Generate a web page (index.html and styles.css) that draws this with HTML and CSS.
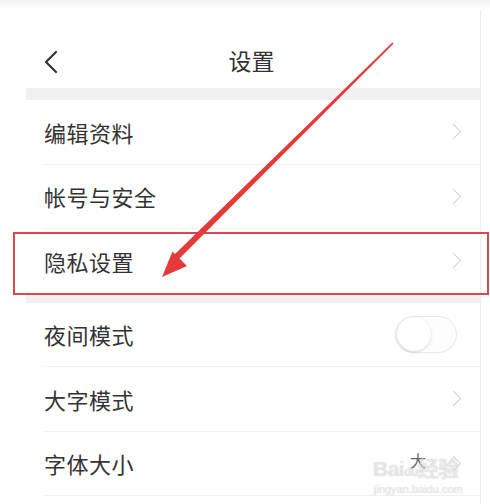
FILE: index.html
```html
<!DOCTYPE html>
<html lang="zh">
<head>
<meta charset="utf-8">
<link rel="stylesheet" href="styles.css">
</head>
<body>
<div class="page">
  <div class="screen">
    <div class="topbar">
      <svg class="back" width="16" height="24" viewBox="0 0 16 24"><path d="M13 2 L3 12 L13 22" fill="none" stroke="#333" stroke-width="2.2" stroke-linecap="round" stroke-linejoin="round"/></svg>
      <div class="title">设置</div>
    </div>
    <div class="band"></div>
    <div class="group">
      <div class="row"><span class="label">编辑资料</span><span class="chev"></span></div>
      <div class="row"><span class="label">帐号与安全</span><span class="chev"></span></div>
      <div class="row"><span class="label">隐私设置</span><span class="chev"></span></div>
    </div>
    <div class="band small"></div>
    <div class="group">
      <div class="row"><span class="label">夜间模式</span><span class="toggle"><span class="knob"></span></span></div>
      <div class="row"><span class="label">大字模式</span><span class="chev"></span></div>
      <div class="row"><span class="label">字体大小</span><span class="right"><span class="value">大</span><span class="chev"></span></span></div>
    </div>
  </div>
  <div class="highlight"></div>
  <svg class="arrow" width="490" height="504" viewBox="0 0 490 504">
    <polygon points="392.3,42.5 393.7,43.5 177.3,260.7 172.7,256.3" fill="#e53a3a"/>
    <polygon points="162,277 172.5,251.5 187,266" fill="#e53a3a"/>
  </svg>
  <div class="watermark">
    <div class="wm1">Bai<span class="paw">du</span>经验</div>
    <div class="wm2">jingyan.baidu.com</div>
  </div>
</div>
</body>
</html>
```
FILE: styles.css
```css
* { box-sizing: border-box; }
html, body { margin: 0; padding: 0; background: #fff; }
body {
  font-family: "Noto Sans CJK SC", "Noto Sans", sans-serif;
  color: #333;
  width: 490px;
  height: 504px;
  overflow: hidden;
}
.page {
  position: relative;
  width: 490px;
  height: 504px;
  padding-top: 10px;
  background: linear-gradient(#f4f4f4 0, #fff 10px);
}
.screen {
  margin-left: 26px;
  width: 455px;
  height: 494px;
  border-right: 1px solid #ececec;
  background: #fff;
}
.topbar {
  height: 78px;
  display: flex;
  align-items: center;
  justify-content: center;
  position: relative;
}
.back {
  position: absolute;
  left: 17px;
  top: 40px;
}
.title {
  font-size: 23px;
  line-height: 1;
  margin-left: -3px;
  margin-top: 22px;
  color: #333;
}
.band {
  height: 12px;
  background: #f0f0f0;
}
.band.small { height: 9px; }
.group { display: flex; flex-direction: column; }
.row {
  height: 64.5px;
  flex: none;
  margin-left: 18px;
  padding-right: 17px;
  display: flex;
  align-items: center;
  justify-content: space-between;
  border-bottom: 1px solid #f0f0f0;
}
.group:first-of-type .row:last-child { border-bottom: none; }
.label {
  font-size: 22px;
  line-height: 1;
  color: #333;
  letter-spacing: 0.5px;
}
.chev {
  width: 11px;
  height: 11px;
  border-top: 1.5px solid #d2d2d2;
  border-right: 1.5px solid #d2d2d2;
  transform: rotate(45deg);
  margin-right: 4px;
}
.right { display: flex; align-items: center; gap: 22px; }
.value { font-size: 16px; color: #666; margin-top: -6px; }
.toggle {
  width: 62px;
  height: 37px;
  border-radius: 19px;
  border: 1px solid #e8e8e8;
  background: #fdfdfd;
  display: flex;
  align-items: center;
  padding: 1px;
  margin-right: 6px;
}
.knob {
  width: 34px;
  height: 34px;
  border-radius: 50%;
  background: #fff;
  box-shadow: 0 1px 3px rgba(0,0,0,0.18);
}
.highlight {
  position: absolute;
  left: 13px;
  top: 232px;
  width: 476px;
  height: 63px;
  border: 2px solid #d9484c;
}
.arrow {
  position: absolute;
  left: 0;
  top: 0;
}
.watermark {
  position: absolute;
  left: 373px;
  top: 458px;
  color: rgba(255,255,255,0.6);
  text-shadow: 0 0 1px rgba(0,0,0,0.25);
  font-family: "Liberation Sans", "Noto Sans CJK SC", sans-serif;
}
.wm1 { font-size: 21px; font-weight: bold; line-height: 22px; letter-spacing: -0.5px; }
.paw { font-size: 12px; }
.wm2 { font-size: 11px; line-height: 12px; margin-left: 1px; }
```
